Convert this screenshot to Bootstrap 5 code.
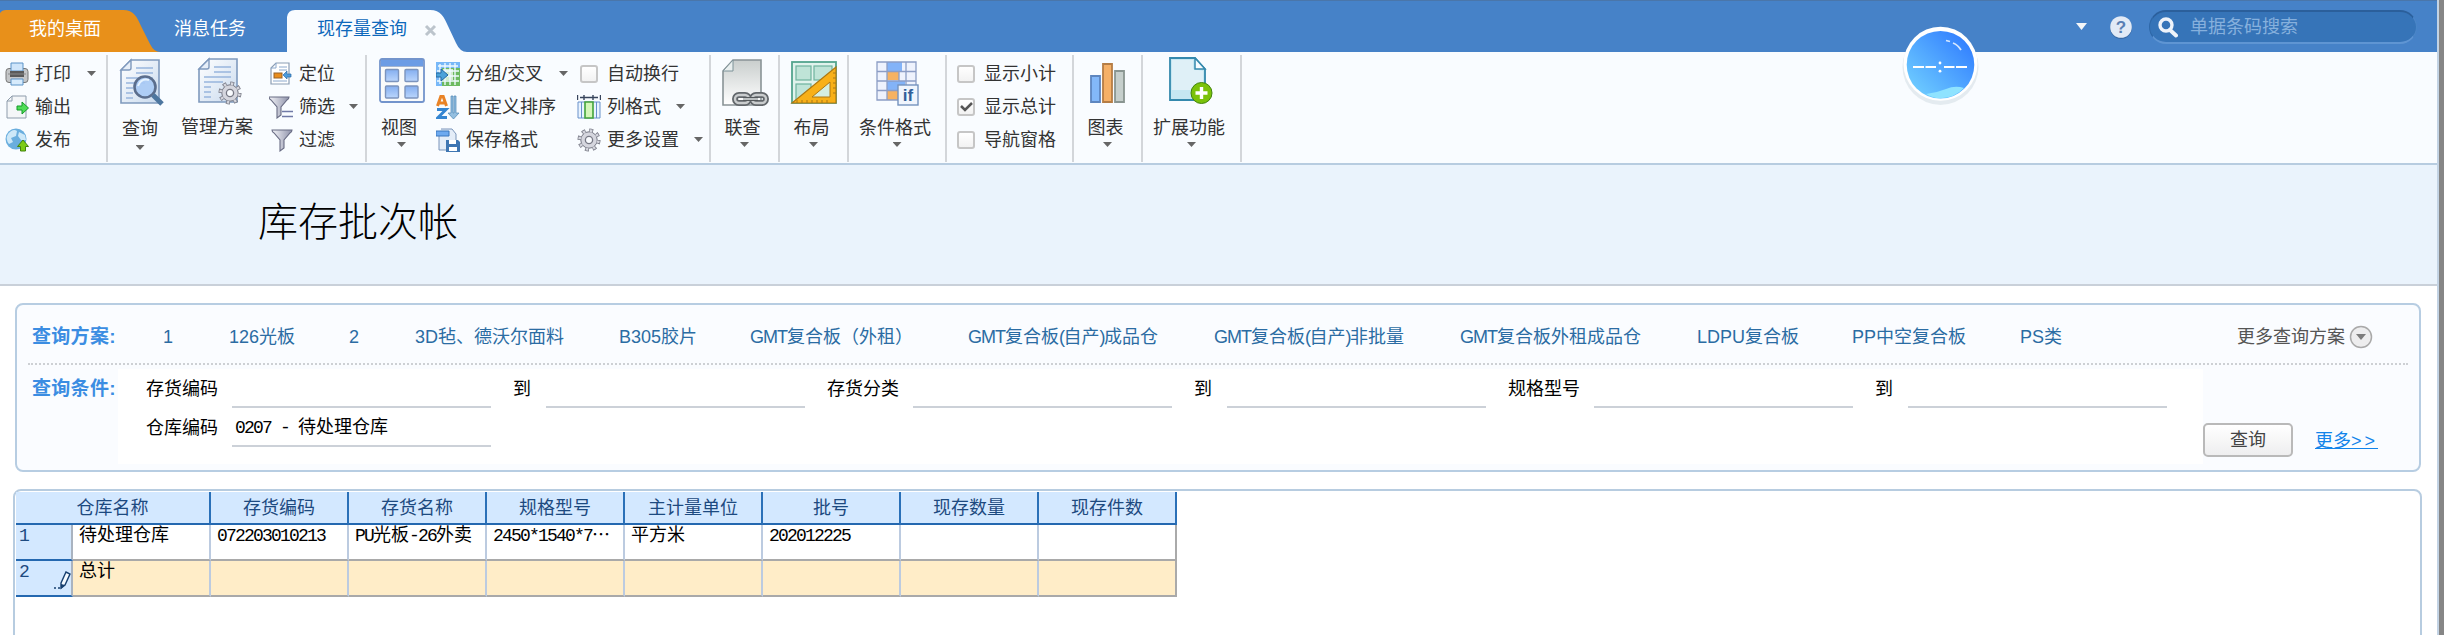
<!DOCTYPE html>
<html lang="zh-CN">
<head>
<meta charset="utf-8">
<title>现存量查询</title>
<link href="https://cdn.jsdelivr.net/npm/bootstrap@5.3.0/dist/css/bootstrap.min.css" rel="stylesheet">
<style>
body{width:2444px;height:635px;overflow:hidden;background:#868686;font-family:"Liberation Sans","Noto Sans CJK SC",sans-serif;font-size:18px;line-height:24px;color:#000}
.shell{width:2439px;height:635px;background:#fff;border-right:2px solid #c3d3e4;overflow:hidden}
.mono{font-family:"Liberation Mono","Noto Sans CJK SC",monospace}
.mono b{font-weight:400;letter-spacing:-1.8px}
/* top bar */
.topbar{height:52px;background:#4682c8;border-top:1px solid #4a76aa}
.tabs{height:42px;margin-top:9px}
.tab{height:42px;line-height:38px;color:#fff;position:relative}
.tab>svg{position:absolute;left:0;top:0}
.tab>span{position:relative}
.t-home{width:157px;padding-left:29px}
.t-msg{width:130px;padding-left:17px}
.t-cur{width:180px;padding-left:30px;color:#0d68bb}
.tools{padding-right:20px;height:52px}
.help{margin:0 16px 0 21px}
.finder{width:268px;height:34px;border-radius:17px;background:#3674b8;border-top:2px solid #2b5f9b;border-left:1px solid #2f68a8;border-bottom:2px solid #5f95d3;border-right:1px solid #4b86c8;color:#86b0dd;padding-left:8px}
/* ribbon */
.ribbon{height:113px;background:#f9fcff;border-bottom:2px solid #b7cce0;color:#333}
.grp{height:107px;margin-top:3px;border-right:2px solid #d3d6da}
.rows{padding-top:2px}
.sb{height:33px;display:flex;align-items:center;white-space:nowrap}
.sb>svg:first-child{width:24px;height:24px;margin-right:6px;flex:none}
.sb .arr{margin-left:auto}
.big{display:flex;flex-direction:column;align-items:center;white-space:nowrap}
.big .pic{width:48px;height:48px;margin-top:3px}
.big span{margin-top:10px}
.big .arr{margin-top:2px}
.arr{width:9px;height:5px;flex:none;background:#666;clip-path:polygon(0 0,100% 0,50% 100%)}
.chk{width:18px;height:18px;border:2px solid #c6c6c6;border-radius:3px;background:linear-gradient(#fff,#f2f2f2);flex:none;display:block}
.ball{position:absolute;left:1900px;top:24px;width:82px;height:84px}
/* title */
.titleband{height:121px;background:#eaf3fc;border-bottom:2px solid #c9d0d9;padding:31px 0 0 258px;font-size:40px;line-height:52px;font-weight:300}
/* filter */
.filter{margin:17px 0 0 15px;width:2406px;height:169px;border:2px solid #b7cde2;border-radius:8px;background:#fafcff}
.cap{color:#3b8de2;font-weight:700;font-size:19px;letter-spacing:.3px}
.schemes{display:grid;height:60px;margin:0 11px;border-bottom:2px dotted #cdd0d4;align-items:center;padding:5px 0 0 4px;color:#2b6ca3;grid-template-columns:131px 66px 120px 66px 204px 131px 218px 246px 246px 237px 155px 168px 217px auto;white-space:nowrap}
.schemes b{font-weight:400;letter-spacing:-1px}
.schemes u{text-decoration:none;letter-spacing:-1.5px}
.schemes .more{color:#555}
.conds{display:grid;grid-template-columns:101px 2085px 1fr;height:100px}
.fields{background:#fff;margin-top:4px;height:95px;padding-left:28px}
.frow{display:flex;height:39px;align-items:flex-start}
.lab{width:86px;line-height:40px}
.to{width:33px;line-height:40px}
.inp{width:259px;height:39px;line-height:40px;border-bottom:2px solid #ccd1d8;margin-right:22px;padding-left:3px}
.qbtn{width:90px;height:34px;border:2px solid #b9b9b9;border-radius:5px;background:linear-gradient(#fff,#eeeeef);color:#444;padding:0;font-size:18px;line-height:28px;margin-top:58px}
.lnk{color:#1284ea;margin:64px 0 0 22px}
.lnk b{font-weight:400;letter-spacing:3px}
/* grid */
.gridpanel{margin:17px 0 0 13px;width:2409px;height:200px;border:2px solid #b7cce0;border-radius:8px 8px 0 0;padding:1px 0 0 1px}
.gt{border-collapse:separate;border-spacing:0;table-layout:fixed;width:1161px}
.gt th{background:#d3e8ff;color:#1d4a80;font-weight:400;text-align:center;height:33px;padding:0;border-right:2px solid #2a70b8;border-bottom:2px solid #2468b0;line-height:28px}
.gt td{height:36px;padding:0 0 0 6px;vertical-align:top;line-height:22px;border-right:2px solid #bccbe0;border-bottom:2px solid #a9a9a9;white-space:nowrap;overflow:hidden}
.gt td:first-child{background:#d3e8ff;color:#1d4a80;border-bottom-color:#2468b0;border-right-color:#a9b3c0;padding-left:3px}
.gt td:last-child{border-right-color:#aaa}
.gt .sum td:not(:first-child){background:#ffedc8}
.pen{position:absolute;left:37px;top:10px}
</style>
<script src="https://cdn.jsdelivr.net/npm/bootstrap@5.3.0/dist/js/bootstrap.bundle.min.js"></script>
</head>
<body>
<svg width="0" height="0" class="position-absolute">
<defs>
<linearGradient id="doc" x1="0" y1="0" x2="1" y2="1"><stop offset="0" stop-color="#fff"/><stop offset="1" stop-color="#c9daee"/></linearGradient>
<linearGradient id="gdoc" x1="0" y1="0" x2="0" y2="1"><stop offset="0" stop-color="#c9cecd"/><stop offset="1" stop-color="#fff"/></linearGradient>
<linearGradient id="fun" x1="0" x2="1"><stop offset="0" stop-color="#f4f4f8"/><stop offset="1" stop-color="#8e92aa"/></linearGradient>
<linearGradient id="blu" x1="0" y1="0" x2="0" y2="1"><stop offset="0" stop-color="#84aef0"/><stop offset="1" stop-color="#bbd6fc"/></linearGradient>
<linearGradient id="ballg" x1="1" y1="0" x2="0" y2="1"><stop offset=".15" stop-color="#3583ff"/><stop offset="1" stop-color="#76d6ff"/></linearGradient>
<g id="page"><path d="M12 2H40V45H2V12Z" fill="url(#doc)" stroke="#7f99bd" stroke-width="1.6"/><path d="M2 12H10Q12 12 12 10V2Z" fill="#e6eef8" stroke="#7f99bd" stroke-width="1.4"/><path d="M17 10H34M17 15H34M7 20H34M7 25H26M7 30H14M7 35H14M7 40H14" stroke="#98b5dd" stroke-width="1.6"/></g>
<g id="gear"><circle cx="12" cy="12" r="9.3" fill="none" stroke="#777985" stroke-width="4.5" stroke-dasharray="3.65 3.65"/><circle cx="12" cy="12" r="8.2" fill="#d5d6de" stroke="#777985"/><circle cx="12" cy="12" r="9.3" fill="none" stroke="#d5d6de" stroke-width="3" stroke-dasharray="2.25 5.05" stroke-dashoffset="-.7"/><circle cx="12" cy="12" r="3.6" fill="#fafcff" stroke="#777985" stroke-width="1.3"/></g>
<path id="funnel" d="M1 2H21Q21 4 19 5L13 12V20L9 23V12L3 5Q1 4 1 2Z" fill="url(#fun)" stroke="#696c84" stroke-width="1.1"/>
</defs></svg>
<div class="shell position-relative">
<header class="topbar d-flex justify-content-between">
 <nav class="tabs d-flex">
  <div class="tab t-home"><svg width="160" height="42"><path d="M0 3Q2 0 6 0H123C134 0 137 7 141 16L150 34Q154 42 160 42H0Z" fill="#e8901a"/></svg><span>我的桌面</span></div>
  <div class="tab t-msg"><span>消息任务</span></div>
  <div class="tab t-cur"><svg width="180" height="42"><path d="M0 42V7Q1 0 8 0H143C154 0 157 7 161 16L169 33Q173 42 180 42Z" fill="#f9fcff"/><path d="M139 16L148 25M148 16L139 25" stroke="#bcc4cc" stroke-width="3"/></svg><span>现存量查询</span></div>
 </nav>
 <div class="tools d-flex align-items-center">
  <svg width="12" height="8"><path d="M0 0H11L5.500 7Z" fill="#f4f6f8"/></svg>
  <svg width="24" height="26" viewBox="0 0 24 26" class="help"><circle cx="12" cy="14" r="11" fill="#3a6aa4"/><circle cx="12" cy="13" r="10.8" fill="#e2eaf6"/><text x="12" y="19" text-anchor="middle" font-size="17" font-weight="700" fill="#5a7fb4">?</text></svg>
  <div class="finder d-flex align-items-center"><svg width="20" height="21" class="me-2" viewBox="0 0 20 21"><circle cx="8" cy="8" r="6" fill="none" stroke="#eef3fa" stroke-width="3.4"/><path d="M12 13L18 18.500" stroke="#eef3fa" stroke-width="4" stroke-linecap="round"/></svg><span class="ps-1">单据条码搜索</span></div>
 </div>
</header>
<svg class="ball" viewBox="0 0 82 84"><circle cx="40.500" cy="43" r="38" fill="#dbe4ea" opacity=".7"/><circle cx="40.500" cy="39.800" r="37" fill="#fff"/><circle cx="40.500" cy="40.700" r="33.800" fill="url(#ballg)"/><path d="M26 70Q36 69 46 65Q55 61 64 64Q55 74 40 74.300Q32 74 26 70Z" fill="#8fe3ff"/><path d="M46 16.500L50 17.500M53 19Q58 21 61 26" stroke="#d6e8ff" stroke-width="1.800" fill="none"/><path d="M13 43H24M25.500 43H36M44 43H54.500M56 43H67" stroke="#fff" stroke-width="1.800"/><circle cx="40" cy="39" r="1.400" fill="#fff"/><circle cx="40" cy="47.200" r="1.400" fill="#fff"/></svg>
<section class="ribbon d-flex">
 <div class="grp rows" style="width:108px;padding-left:5px;padding-right:10px">
  <div class="sb"><svg viewBox="0 0 24 24"><rect x="1" y="6.500" width="22" height="14" rx="3" fill="#c4c6c8" stroke="#777"/><path d="M6 1H18V9H6Z" fill="#cfe5fa" stroke="#5a93c8"/><path d="M5 9H19V15H5Z" fill="#5a5a5a"/><path d="M3 12H21" stroke="#8a8a8a"/><path d="M6 17H18V23H6Z" fill="#d7ebfc" stroke="#5a93c8"/></svg>打印<i class="arr"></i></div>
  <div class="sb"><svg viewBox="0 0 24 24"><path d="M7 1H21V23H2V6Z" fill="#f4f6f8" stroke="#8e9cab"/><path d="M2 6H7V1" fill="none" stroke="#8e9cab"/><path d="M12 11H17V7L23.500 13L17 19V15H12Z" fill="#4fdc55" stroke="#159a2a"/></svg>输出</div>
  <div class="sb"><svg viewBox="0 0 24 24"><circle cx="11" cy="11" r="10.500" fill="#6aaede"/><path d="M3 6Q8 0 12 3L11 8L6 10L8 14L4 16Q0 11 3 6M14 4L20 7L21 12L16 12L13 8Z" fill="#cde8f8"/><path d="M15.500 23V18.500H12.500L18 12L23.500 18.500H20.500V23Z" fill="#7ccc16" stroke="#43840c"/></svg>发布</div>
 </div>
 <div class="grp d-flex" style="width:259px">
  <div class="big" style="width:64px"><svg class="pic" viewBox="0 0 48 48" style="margin-left:6px"><use href="#page"/><circle cx="26" cy="29" r="10.500" fill="#a9caf5" fill-opacity=".9" stroke="#5b6e8d" stroke-width="2.600"/><path d="M19 28Q22 20 30 22" stroke="#e6f3ff" stroke-width="2" fill="none"/><path d="M34 37L43 46" stroke="#4d769f" stroke-width="5"/></svg><span style="margin-top:11px">查询</span><i class="arr" style="margin-top:4px"></i></div>
  <div class="big" style="width:90px"><svg class="pic" viewBox="0 0 48 48" style="margin-left:7px;margin-top:2px"><use href="#page"/><use href="#gear" transform="translate(21 24)"/></svg><span>管理方案</span></div>
  <div class="rows" style="margin-left:7px;width:93px">
   <div class="sb"><svg viewBox="0 0 24 24"><path d="M7 1H20V22H2V6Z" fill="#fff" stroke="#8b9db4" stroke-width="1.200"/><path d="M2 6H7V1M10 5H18M10 8H18M4 19H18" fill="none" stroke="#8ba8cc"/><rect x="5" y="11" width="8" height="5" fill="#e98d1d" stroke="#97632a"/><path d="M22 12H18V9L14 13L18 17V15H22Z" fill="#4d9bdc" stroke="#2d6ba8" stroke-width=".7"/></svg>定位</div>
   <div class="sb"><svg viewBox="0 0 24 24"><use href="#funnel" transform="translate(-1 0)"/><path d="M13 16.500H24M13 21.500H24" stroke="#7079a6" stroke-width="1.600"/></svg>筛选<i class="arr me-1"></i></div>
   <div class="sb"><svg viewBox="0 0 24 24"><use href="#funnel" transform="translate(2 0)"/></svg>过滤</div>
  </div>
 </div>
 <div class="grp d-flex" style="width:344px">
  <div class="big" style="width:69px"><svg class="pic" viewBox="0 0 48 48" style="margin-left:1px"><rect x="2" y="1" width="44" height="43" rx="2" fill="#fafbfb" stroke="#7394cc" stroke-width="1.800"/><rect x="3" y="2" width="42" height="6" fill="#6c9ce5"/><path d="M3 8.500H45" stroke="#a4b4cf"/><g fill="url(#blu)" stroke="#7c94bd" stroke-width="1.400"><rect x="7.500" y="11.500" width="13" height="12" rx="1"/><rect x="27" y="11.500" width="13" height="12" rx="1"/><rect x="7.500" y="28" width="13" height="12" rx="1"/><rect x="27" y="28" width="13" height="12" rx="1"/></g></svg><span style="margin-left:-5px">视图</span><i class="arr"></i></div>
  <div class="rows" style="width:132px">
   <div class="sb"><svg viewBox="0 0 24 24"><path d="M0 0H24V6H6V24H0Z" fill="#78b8f8"/><path d="M6 6H24V24H6Z" fill="#6dba61"/><path d="M7 7H17V18H7Z" fill="#d4ecd0"/><path d="M2 4H22M4 2V22M9 1V23M14 1V23M19 1V23M1 9H23M1 14H23M1 19H23" stroke="#eefaff" stroke-width="1.400"/><path d="M0 11H5V7L12 13L5 19V15H0Z" fill="#4ba2da" stroke="#2469a2"/></svg>分组/交叉<i class="arr"></i></div>
   <div class="sb"><svg viewBox="0 0 24 24"><path d="M1.500 11L5 1H7L10.500 11M3 8H9" fill="none" stroke="#e98326" stroke-width="3"/><path d="M1 14.500H10L2 22.500H11" fill="none" stroke="#3586d2" stroke-width="3"/><path d="M12 18H15V1H17V18H18V1H20V18H23L17.500 24Z" fill="#94bfe0" stroke="#4e88b5" stroke-width=".7"/></svg>自定义排序</div>
   <div class="sb"><svg viewBox="0 0 24 24"><path d="M5 1H16L20 6V22H3V6" fill="#e4edf8" stroke="#7b95ba"/><path d="M0 3H13V8H0Z" fill="#6eaaf0" stroke="#3a76bd"/><path d="M12 12H22L24 14V24H10V12Z" fill="#3f76b2"/><path d="M13 12H20V16H13ZM13 19H21V23H13Z" fill="#fff"/></svg>保存格式</div>
  </div>
  <div class="rows" style="margin-left:9px;width:125px">
   <div class="sb"><i class="chk" style="margin:0 9px 0 3px"></i>自动换行</div>
   <div class="sb"><svg viewBox="0 0 24 24"><path d="M0.500 0V5M23.500 0V5M3 2.500H21M7 0V5M16 0V5" stroke="#38455c" stroke-width="1.400"/><path d="M1 7H23V23H1ZM4.500 7V23M19.500 7V23" fill="#e9f3ff" stroke="#6891ca"/><path d="M8 7H16V23H8Z" fill="#d4f6b8" stroke="#43a33a" stroke-width="1.600"/></svg>列格式<i class="arr" style="margin-left:15px"></i></div>
   <div class="sb"><svg viewBox="0 0 24 24"><use href="#gear"/></svg>更多设置<i class="arr" style="margin-left:15px"></i></div>
  </div>
 </div>
 <div class="grp big" style="width:69px"><svg class="pic" viewBox="0 0 48 48"><path d="M12 2H40V47H2V13Z" fill="url(#gdoc)" stroke="#899396" stroke-width="1.600"/><path d="M2 13H12V2Z" fill="#e9efef" stroke="#7d9298"/><g fill="none" stroke="#62676b" stroke-width="6"><rect x="14" y="37" width="14" height="8" rx="4"/><rect x="31" y="37" width="14" height="8" rx="4"/></g><g fill="none" stroke="#c9cccd" stroke-width="2.400"><rect x="14" y="37" width="14" height="8" rx="4"/><rect x="31" y="37" width="14" height="8" rx="4"/></g><path d="M22 41H37" stroke="#55595c" stroke-width="4"/><path d="M22 41H37" stroke="#c9cccd" stroke-width="1.800"/></svg><span style="margin-left:-4px">联查</span><i class="arr"></i></div>
 <div class="grp big" style="width:69px"><svg class="pic" viewBox="0 0 48 48"><rect x="2" y="4" width="44" height="41" fill="#e1f3ec" stroke="#54a58e" stroke-width="1.800"/><g fill="#bfe4d7" stroke="#6eb39d" stroke-width="1.200"><rect x="6" y="8" width="15" height="14"/><rect x="24" y="8" width="18" height="14"/><rect x="6" y="26" width="15" height="16"/></g><path d="M2 45L46 9V45Z" fill="#f8b018" stroke="#ae7812" stroke-width="1.200"/><path d="M22 39L40 24V39Z" fill="#d5eee0" stroke="#ae7812"/><path d="M7 42V45M12 42V45M17 42V45M22 42V45M27 42V45M32 42V45M37 42V45M43 15H46M43 20H46M43 25H46M43 30H46M43 35H46" stroke="#a87818"/></svg><span style="margin-left:-4px">布局</span><i class="arr"></i></div>
 <div class="grp big" style="width:98px"><svg class="pic" viewBox="0 0 48 48"><path d="M4 4H43V42H4Z" fill="#eef2fd"/><path d="M14 4H29V13H14ZM14 23H32V32H14Z" fill="#83b3f8"/><path d="M14 14H26V22H14ZM14 33H26V42H14Z" fill="#f6b262"/><path d="M4 4H43V42H4ZM14 4V42M33 4V42M4 13.500H43M4 23H43M4 32.500H43M26 13V23M26 32V42" fill="none" stroke="#8c9dc5" stroke-width="1.300"/><rect x="25" y="27" width="20" height="20" fill="#f0f5fd" stroke="#7493be" stroke-width="1.400"/><text x="35" y="43" font-size="17" font-weight="700" text-anchor="middle" fill="#315f9a">if</text></svg><span style="margin-left:-4px">条件格式</span><i class="arr"></i></div>
 <div class="grp rows" style="width:127px;padding-left:10px">
  <div class="sb"><i class="chk" style="margin-right:9px"></i>显示小计</div>
  <div class="sb"><i class="chk" style="margin-right:9px"><svg width="14" height="14" class="d-block"><path d="M2 6L6 10L13 3" fill="none" stroke="#555" stroke-width="2.500"/></svg></i>显示总计</div>
  <div class="sb"><i class="chk" style="margin-right:9px"></i>导航窗格</div>
 </div>
 <div class="grp big" style="width:69px"><svg class="pic" viewBox="0 0 48 48"><g stroke-width="1.800"><path d="M7 18H16V44H7Z" fill="#83b8f9" stroke="#5e86bf"/><path d="M19 6H28V44H19Z" fill="#f5b067" stroke="#b57d45"/><path d="M31 13H40V44H31Z" fill="#c6cfcc" stroke="#899591"/></g></svg><span style="margin-left:-4px">图表</span><i class="arr"></i></div>
 <div class="grp big" style="width:99px"><svg class="pic" viewBox="0 0 48 48" style="margin-top:2px"><path d="M2 1H27L37 12V43H2Z" fill="#c6e7f2" stroke="#3489ad" stroke-width="1.800"/><path d="M4 3H25V12L35 14V33H4Z" fill="#dff0f7"/><path d="M27 1V12H37Z" fill="#f8fcff" stroke="#3489ad" stroke-width="1.500"/><circle cx="33.500" cy="36" r="10.500" fill="#7bc20a" stroke="#41840c"/><path d="M33.500 30V42M27.500 36H39.500" stroke="#fff" stroke-width="3.400"/></svg><span style="margin-top:11px;margin-left:-5px">扩展功能</span><i class="arr"></i></div>
</section>
<div class="titleband">库存批次帐</div>
<section class="filter">
 <div class="schemes"><span class="cap">查询方案:</span><span>1</span><span>126光板</span><span>2</span><span>3D毡、德沃尔面料</span><span>B305胶片</span><span><b>GMT</b>复合板（外租）</span><span><b>GMT</b>复合板<u>(</u>自产<u>)</u>成品仓</span><span><b>GMT</b>复合板<u>(</u>自产<u>)</u>非批量</span><span><b>GMT</b>复合板外租成品仓</span><span>LDPU复合板</span><span>PP中空复合板</span><span>PS类</span><span class="more d-flex align-items-center">更多查询方案<svg width="24" height="24" class="ms-1"><circle cx="12" cy="12" r="10.500" fill="#ededee" stroke="#a9a9a9" stroke-width="1.500"/><path d="M7 9H17L12 15Z" fill="#7c7c7c"/></svg></span></div>
 <div class="conds">
  <span class="cap" style="padding:12px 0 0 15px">查询条件:</span>
  <div class="fields">
   <div class="frow"><span class="lab">存货编码</span><span class="inp"></span><span class="to">到</span><span class="inp"></span><span class="lab">存货分类</span><span class="inp"></span><span class="to">到</span><span class="inp"></span><span class="lab">规格型号</span><span class="inp"></span><span class="to">到</span><span class="inp"></span></div>
   <div class="frow"><span class="lab">仓库编码</span><span class="inp mono"><b>0207 - </b>待处理仓库</span></div>
  </div>
  <div class="d-flex align-items-start"><button class="qbtn">查询</button><a class="lnk" href="#">更多<b>&gt;&gt;</b></a></div>
 </div>
</section>
<section class="gridpanel">
 <table class="gt">
  <colgroup><col style="width:57px"><col span="8" style="width:138px"></colgroup>
  <tr><th colspan="2">仓库名称</th><th>存货编码</th><th>存货名称</th><th>规格型号</th><th>主计量单位</th><th>批号</th><th>现存数量</th><th>现存件数</th></tr>
  <tr class="mono"><td><b>1</b></td><td>待处理仓库</td><td><b>072203010213</b></td><td><b>PU</b>光板<b>-26</b>外卖</td><td><b>2450*1540*7</b>⋯</td><td>平方米</td><td><b>202012225</b></td><td></td><td></td></tr>
  <tr class="sum mono"><td class="position-relative"><b>2</b><svg width="18" height="20" class="pen" viewBox="0 0 18 20"><path d="M8 12L13 1L17 3L12 14L8 17Z" fill="#f4faff" stroke="#173f6f" stroke-width="1.400"/><path d="M8 13L12 14L8 18Z" fill="#173f6f"/><path d="M1 17H3M5 17H7" stroke="#173f6f" stroke-width="1.500"/></svg></td><td>总计</td><td></td><td></td><td></td><td></td><td></td><td></td><td></td></tr>
 </table>
</section>
</div>
</body>
</html>
